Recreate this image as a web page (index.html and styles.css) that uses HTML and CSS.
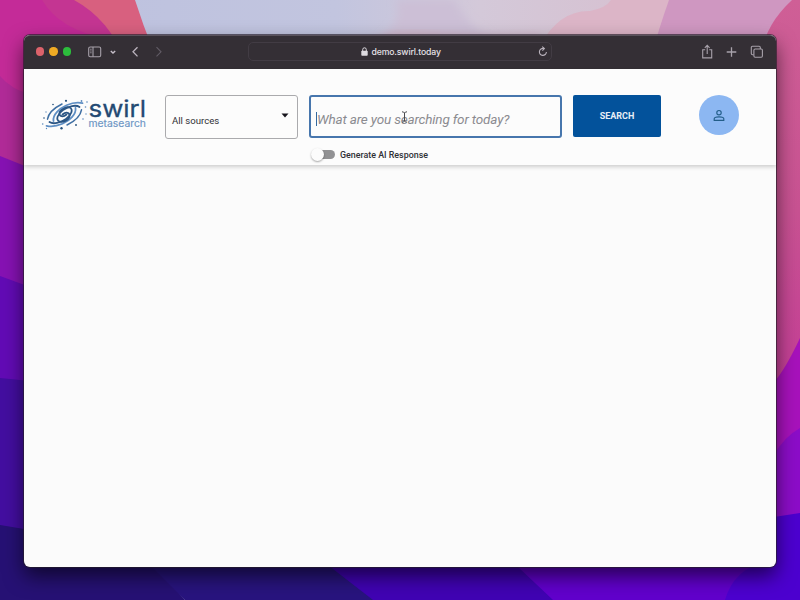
FILE: index.html
```html
<!DOCTYPE html>
<html lang="en">
<head>
<meta charset="utf-8">
<title>Swirl Metasearch</title>
<link rel="stylesheet" href="styles.css">
</head>
<body>
<svg class="wallpaper" viewBox="0 0 800 600" preserveAspectRatio="none" aria-hidden="true">
  <defs>
    <linearGradient id="sky" x1="0" x2="1"><stop offset="0" stop-color="#bcc1df"/><stop offset=".42" stop-color="#c2c5df"/><stop offset=".6" stop-color="#d4c9d9"/><stop offset="1" stop-color="#d9b8c9"/></linearGradient>
    <linearGradient id="rose" x1="0" y1="0" x2="0" y2="1"><stop offset="0" stop-color="#cf5f96"/><stop offset=".35" stop-color="#c85292"/><stop offset=".65" stop-color="#c43e96"/></linearGradient>
    <filter id="soft"><feGaussianBlur stdDeviation="4"/></filter>
  </defs>
  <rect width="800" height="600" fill="url(#sky)"/>
  <path d="M395 0H455Q465 25 495 40H380Q405 20 395 0Z" fill="#ccbfd6" filter="url(#soft)"/>
  <path d="M370 42Q395 28 430 32T540 34V48H370Z" fill="#d1b8cb" filter="url(#soft)"/>
  <path d="M540 45Q560 10 590 11Q606 8 611 0H680V45Z" fill="#dcb5c7"/>
  <path d="M669 0H800V60H650Q660 25 669 0Z" fill="#cf97c1"/>
  <path d="M792 0Q766 24 762 52V600H800V0Z" fill="url(#rose)"/>
  <path d="M0 0H135Q143 25 153 50V90H0Z" fill="#d8607f"/>
  <path d="M0 0H74Q109 19 125 60V100H0Z" fill="#c43592"/>
  <path d="M0 0H42Q60 30 105 38L110 110H0Z" fill="#c42b98"/>
  <path d="M0 76Q12 90 30 94V180H0Z" fill="#b12b98"/>
  <path d="M0 156L30 168V300H0Z" fill="#8612b3"/>
  <path d="M0 276L30 287V400H0Z" fill="#620bb5"/>
  <path d="M0 378L30 381V540H0Z" fill="#430ea0"/>
  <path d="M0 525L30 530L150 560L185 600H0Z" fill="#261174"/>
  <path d="M140 555L185 600H380L320 550Z" fill="#28147e"/>
  <path d="M315 555L373 600H560L500 550Z" fill="#4003b3"/>
  <path d="M500 550L553 600H800V350Q783 385 775 405V550Z" fill="#6100cc"/>
  <path d="M800 338Q785 370 774 382V550H800Z" fill="#a712bb"/>
  <path d="M800 428Q784 437 774 455V550H800Z" fill="#8c0dc8"/>
  <path d="M800 513L774 517V560Q735 565 725 600H800Z" fill="#4c00cf"/>
</svg>

<div class="window">
  <div class="toolbar">
    <div class="lights"><i class="red"></i><i class="amber"></i><i class="green"></i></div>
    <svg class="nav" width="80" height="16" viewBox="0 0 80 16" fill="none" stroke="#a7a1aa" stroke-width="1.1">
      <rect x=".7" y="3" width="12" height="9.7" rx="1.5"/><path d="M5 3V12.7M2.3 5.2h1.2M2.3 7h1.2M2.3 8.8h1.2"/>
      <path d="M22.8 7l2.2 2 2.2-2" stroke="#c5bec8" stroke-width="1.4"/>
      <path d="M49.5 3.2L45 7.8l4.5 4.6" stroke="#bbb4be" stroke-width="1.3"/>
      <path d="M68.5 3.2L73 7.8l-4.5 4.6" stroke="#625c66"/>
    </svg>
    <div class="address">
      <svg width="7" height="9" viewBox="0 0 7 9"><rect x=".3" y="3.7" width="6.4" height="5" rx=".8" fill="#dedbe0"/><path d="M1.7 4V2.6a1.8 1.8 0 0 1 3.6 0V4" fill="none" stroke="#dedbe0"/></svg>
      <span>demo.swirl.today</span>
      <svg class="reload" width="10" height="11" viewBox="0 0 10 11" fill="none" stroke="#b9b2bc" stroke-width="1.1"><path d="M5.7 2.5A3.5 3.5 0 1 0 8.4 6M4.2.6l2.2 2-2 2.1"/></svg>
    </div>
    <svg class="actions" width="64" height="16" viewBox="0 0 64 16" fill="none" stroke="#a7a1aa" stroke-width="1.1">
      <path d="M4.2 5.7H1.7v8.2h9V5.7H8.2M6.2 10V1.5M3.8 3.8l2.4-2.4 2.4 2.4"/>
      <path d="M30.5 3.2v9.6M25.7 8h9.6" stroke-width="1.3"/>
      <path d="M52.7 10.8h-1.2a1.2 1.2 0 0 1-1.2-1.2V3.5a1.2 1.2 0 0 1 1.2-1.2h6.6a1.2 1.2 0 0 1 1.2 1.2v1.4"/><rect x="52.9" y="5" width="8.5" height="8.3" rx="1.2"/>
    </svg>
  </div>

  <header class="header">
    <svg class="logo" width="108" height="38" viewBox="0 0 108 38">
      <defs>
        <g id="arm" fill="none" stroke-linecap="round">
          <path d="M25.5 19.5C22 22.5 18 21.5 18.5 18C19.2 14 24.5 11.5 28.5 12.5C33 14 30 20.5 25 24C19.5 28 12 29.5 8.5 27" stroke="#2b5685" stroke-width="1.8"/>
          <path d="M34.5 13C35.5 19 29 25.5 21.5 28.8C15.5 31.3 9.5 31.8 5.5 30.8" stroke="#5f8fc4" stroke-width="1.8"/>
          <path d="M40.5 14.8C39.5 21 33 26.5 26 30" stroke="#3f6fa3" stroke-width="1.5"/>
        </g>
      </defs>
      <use href="#arm"/><use href="#arm" transform="rotate(180 23.5 19.5)"/>
      <g fill="#234f7c"><circle cx="25" cy="5.8" r="1.1"/><circle cx="20.5" cy="33.3" r="1.2"/><circle cx="35" cy="30" r=".9"/><circle cx="12" cy="9.5" r=".8"/><circle cx="3" cy="23" r=".8"/></g>
      <g fill="#5c8abd"><circle cx="40.5" cy="6" r=".9"/><circle cx="46" cy="7" r=".8"/><circle cx="44.5" cy="12" r=".8"/><circle cx="42" cy="24" r=".8"/><circle cx="45" cy="19" r=".7"/><circle cx="1.7" cy="29" r=".8"/><circle cx="5.5" cy="33.5" r=".7"/><circle cx="5" cy="17" r=".7"/></g>
      <text class="brand" x="47.5" y="22.2" textLength="57.5" lengthAdjust="spacingAndGlyphs">swirl</text>
      <text class="subbrand" x="47.5" y="31.8" textLength="57.5" lengthAdjust="spacingAndGlyphs">metasearch</text>
    </svg>
    <div class="select"><span>All sources</span><svg width="8" height="5" viewBox="0 0 8 5"><path d="M.5.5h7L4 4.5Z" fill="#17151d"/></svg></div>
    <div class="query">
      <div class="field"><i class="caret"></i><span>What are you searching for today?</span>
        <svg class="pointer" width="7" height="12" viewBox="0 0 7 12" fill="none" stroke="#4b4b4e"><path d="M1 .8Q3 .8 3.5 2Q4 .8 6 .8M3.5 2v8M1 11.2Q3 11.2 3.5 10Q4 11.2 6 11.2"/></svg>
      </div>
      <div class="toggle"><i class="switch"></i><span>Generate AI Response</span></div>
    </div>
    <div class="search"><span>SEARCH</span></div>
    <div class="avatar"><svg width="12" height="13" viewBox="0 0 12 13" fill="none" stroke="#225d88" stroke-width="1.15"><circle cx="6" cy="3.7" r="2.2"/><path d="M1.2 11.3V9.8C1.2 8.4 4 7.8 6 7.8s4.8.6 4.8 2v1.5Z"/></svg></div>
  </header>
  <main class="results"></main>
</div>
</body>
</html>
```

FILE: styles.css
```css
* { box-sizing: border-box; }
body { margin: 0; height: 600px; overflow: hidden; padding: 35px 24px 33px 23.5px; font-family: Roboto, sans-serif; color: #303036; }
svg { display: block; flex: none; }
i { display: block; flex: none; }
span { white-space: nowrap; }
.wallpaper { position: absolute; inset: 0; width: 800px; height: 600px; }
.window { position: relative; display: flex; flex-direction: column; height: 532px; border-radius: 6px; background: #fbfbfb; box-shadow: 0 0 0 1px rgba(38, 31, 43, .65), 0 9px 20px rgba(0, 0, 0, .6); }
.toolbar { display: flex; align-items: center; height: 34px; padding: 0 0 2px 12.5px; border-radius: 6px 6px 0 0; background: #342f35; border-top: 1px solid #59525b; }
.lights { display: flex; gap: 5px; margin-right: 17px; }
.lights i { width: 8.4px; height: 8.4px; border-radius: 50%; }
.red { background: #dc626b; }
.amber { background: #efaa24; }
.green { background: #2cbd3c; }
.address { display: flex; align-items: center; justify-content: center; position: relative; width: 304px; height: 19px; margin-left: 79.5px; padding-left: 2px; border: 1px solid #423c44; border-radius: 5px; color: #e4e0e6; font: 500 8.7px Inter, sans-serif; letter-spacing: -.16px; gap: 4px; }
.reload { position: absolute; right: 3px; top: 3px; }
.actions { margin-left: auto; margin-right: 11px; }
.header { display: flex; align-items: flex-start; height: 95.5px; padding: 26px 0 0 17.5px; background: #fcfcfc; box-shadow: 0 2px 4px rgba(0, 0, 0, .18); }
.logo { margin-right: 16px; }
.brand { font: 400 22.5px Inter, sans-serif; fill: #244a73; stroke: #244a73; stroke-width: .3px; }
.subbrand { font: 400 9.6px Inter, sans-serif; fill: #6d96c5; stroke: #6d96c5; stroke-width: .15px; }
.select { display: flex; justify-content: space-between; width: 133px; height: 44px; margin-right: 11px; padding: 17px 8px 0 6px; border: 1px solid #aaaaad; border-radius: 3px; font-size: 9.6px; line-height: 15px; }
.query { width: 253px; margin-right: 11px; }
.field { position: relative; display: flex; align-items: center; height: 43px; padding: 4px 0 0 5px; border: 2px solid #4776ad; border-radius: 3px; color: #8b8b90; font-size: 13.5px; font-style: italic; letter-spacing: -.17px; }
.caret { width: 1px; height: 14px; background: #34699f; }
.pointer { position: absolute; left: 90px; top: 14px; }
.toggle { display: flex; align-items: center; gap: 5px; margin: 9px 0 0 3px; height: 15px; font-size: 8.9px; font-weight: 500; }
.switch { position: relative; width: 23px; height: 9px; border-radius: 5px; background: #929294; }
.switch::before { content: ""; position: absolute; left: -1px; top: -2px; width: 13px; height: 13px; border-radius: 50%; background: #fcfcfc; box-shadow: 0 1px 2px rgba(0, 0, 0, .35); }
.search { display: flex; align-items: center; justify-content: center; width: 88px; height: 42px; border-radius: 2px; background: #03529b; color: #e7eef6; font-size: 9px; font-weight: 700; }
.avatar { display: flex; align-items: center; justify-content: center; width: 40px; height: 40px; margin-left: 37.5px; border-radius: 50%; background: #8cb7f2; }
.results { flex: 1; }
```
